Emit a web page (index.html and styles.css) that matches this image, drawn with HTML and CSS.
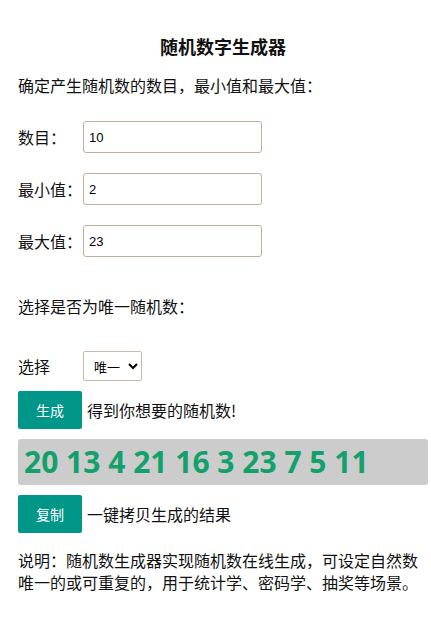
FILE: index.html
```html
<!DOCTYPE html>
<html lang="zh-CN">
<head>
    <meta charset="UTF-8">
    <meta name="viewport" content="width=device-width, initial-scale=1.0">
    <title>随机数字生成器</title>
    <link rel="stylesheet" href="styles.css">
</head>
<body>
    <div class="container">
        <h1>随机数字生成器</h1>
        <p class="intro">确定产生随机数的数目，最小值和最大值：</p>

        <div class="field">
            <label for="count">数目：</label>
            <input type="text" id="count" value="10">
        </div>
        <div class="field">
            <label for="min">最小值：</label>
            <input type="text" id="min" value="2">
        </div>
        <div class="field">
            <label for="max">最大值：</label>
            <input type="text" id="max" value="23">
        </div>

        <p class="unique-title">选择是否为唯一随机数：</p>

        <div class="field select-row">
            <label for="unique">选择</label>
            <select id="unique">
                <option>唯一</option>
                <option>可重复</option>
            </select>
        </div>

        <div class="action">
            <button>生成</button>
            <span>得到你想要的随机数!</span>
        </div>

        <div class="result">20 13 4 21 16 3 23 7 5 11</div>

        <div class="action">
            <button>复制</button>
            <span>一键拷贝生成的结果</span>
        </div>

        <p class="note">说明：随机数生成器实现随机数在线生成，可设定自然数唯一的或可重复的，用于统计学、密码学、抽奖等场景。</p>
    </div>
</body>
</html>
```

FILE: styles.css
```css
body {
    font-family: "Noto Sans CJK SC", "Noto Sans", sans-serif;
    background: #fff;
    color: #111;
    margin: 0;
    padding: 0 3px 0 18px;
    font-size: 16px;
}
.container {
    width: 410px;
}
h1 {
    font-size: 18px;
    font-weight: bold;
    text-align: center;
    margin: 33px 0 0;
    line-height: 26px;
}
.intro {
    margin: 14px 0 24px;
    line-height: 24px;
}
.field {
    display: flex;
    align-items: center;
    height: 32px;
    margin-bottom: 20px;
}
.field label {
    width: 65px;
}
.field input {
    width: 179px;
    height: 32px;
    box-sizing: border-box;
    border: 1px solid #c4aba0;
    border-radius: 3px;
    padding: 0 5px;
    font-family: "Liberation Sans", Arial, sans-serif;
    font-size: 13px;
    color: #000;
}
.unique-title {
    margin: 37px 0 0;
    line-height: 24px;
}
.select-row {
    margin: 33px 0 10px;
    height: 30px;
}
.select-row select {
    width: 59px;
    height: 30px;
    border: 1px solid #c9b8b0;
    border-radius: 2px;
    background: #fff;
    font-family: "Noto Sans CJK SC", sans-serif;
    font-size: 13px;
    padding: 0 2px 0 6px;
}
.action {
    display: flex;
    align-items: center;
    gap: 5px;
}
.action button {
    width: 64px;
    height: 38px;
    background: #009688;
    color: #fff;
    border: none;
    border-radius: 2px;
    font-family: "Noto Sans CJK SC", sans-serif;
    font-size: 14px;
    cursor: pointer;
}
.result {
    margin: 10px 0;
    background: #cccccc;
    border-radius: 3px;
    height: 46px;
    line-height: 46px;
    padding: 0 6px;
    font-family: "Open Sans", sans-serif;
    font-weight: bold;
    font-size: 30px;
    color: #12a06b;
    white-space: nowrap;
}
.note {
    margin: 16px 0 0;
    line-height: 22px;
}
```
